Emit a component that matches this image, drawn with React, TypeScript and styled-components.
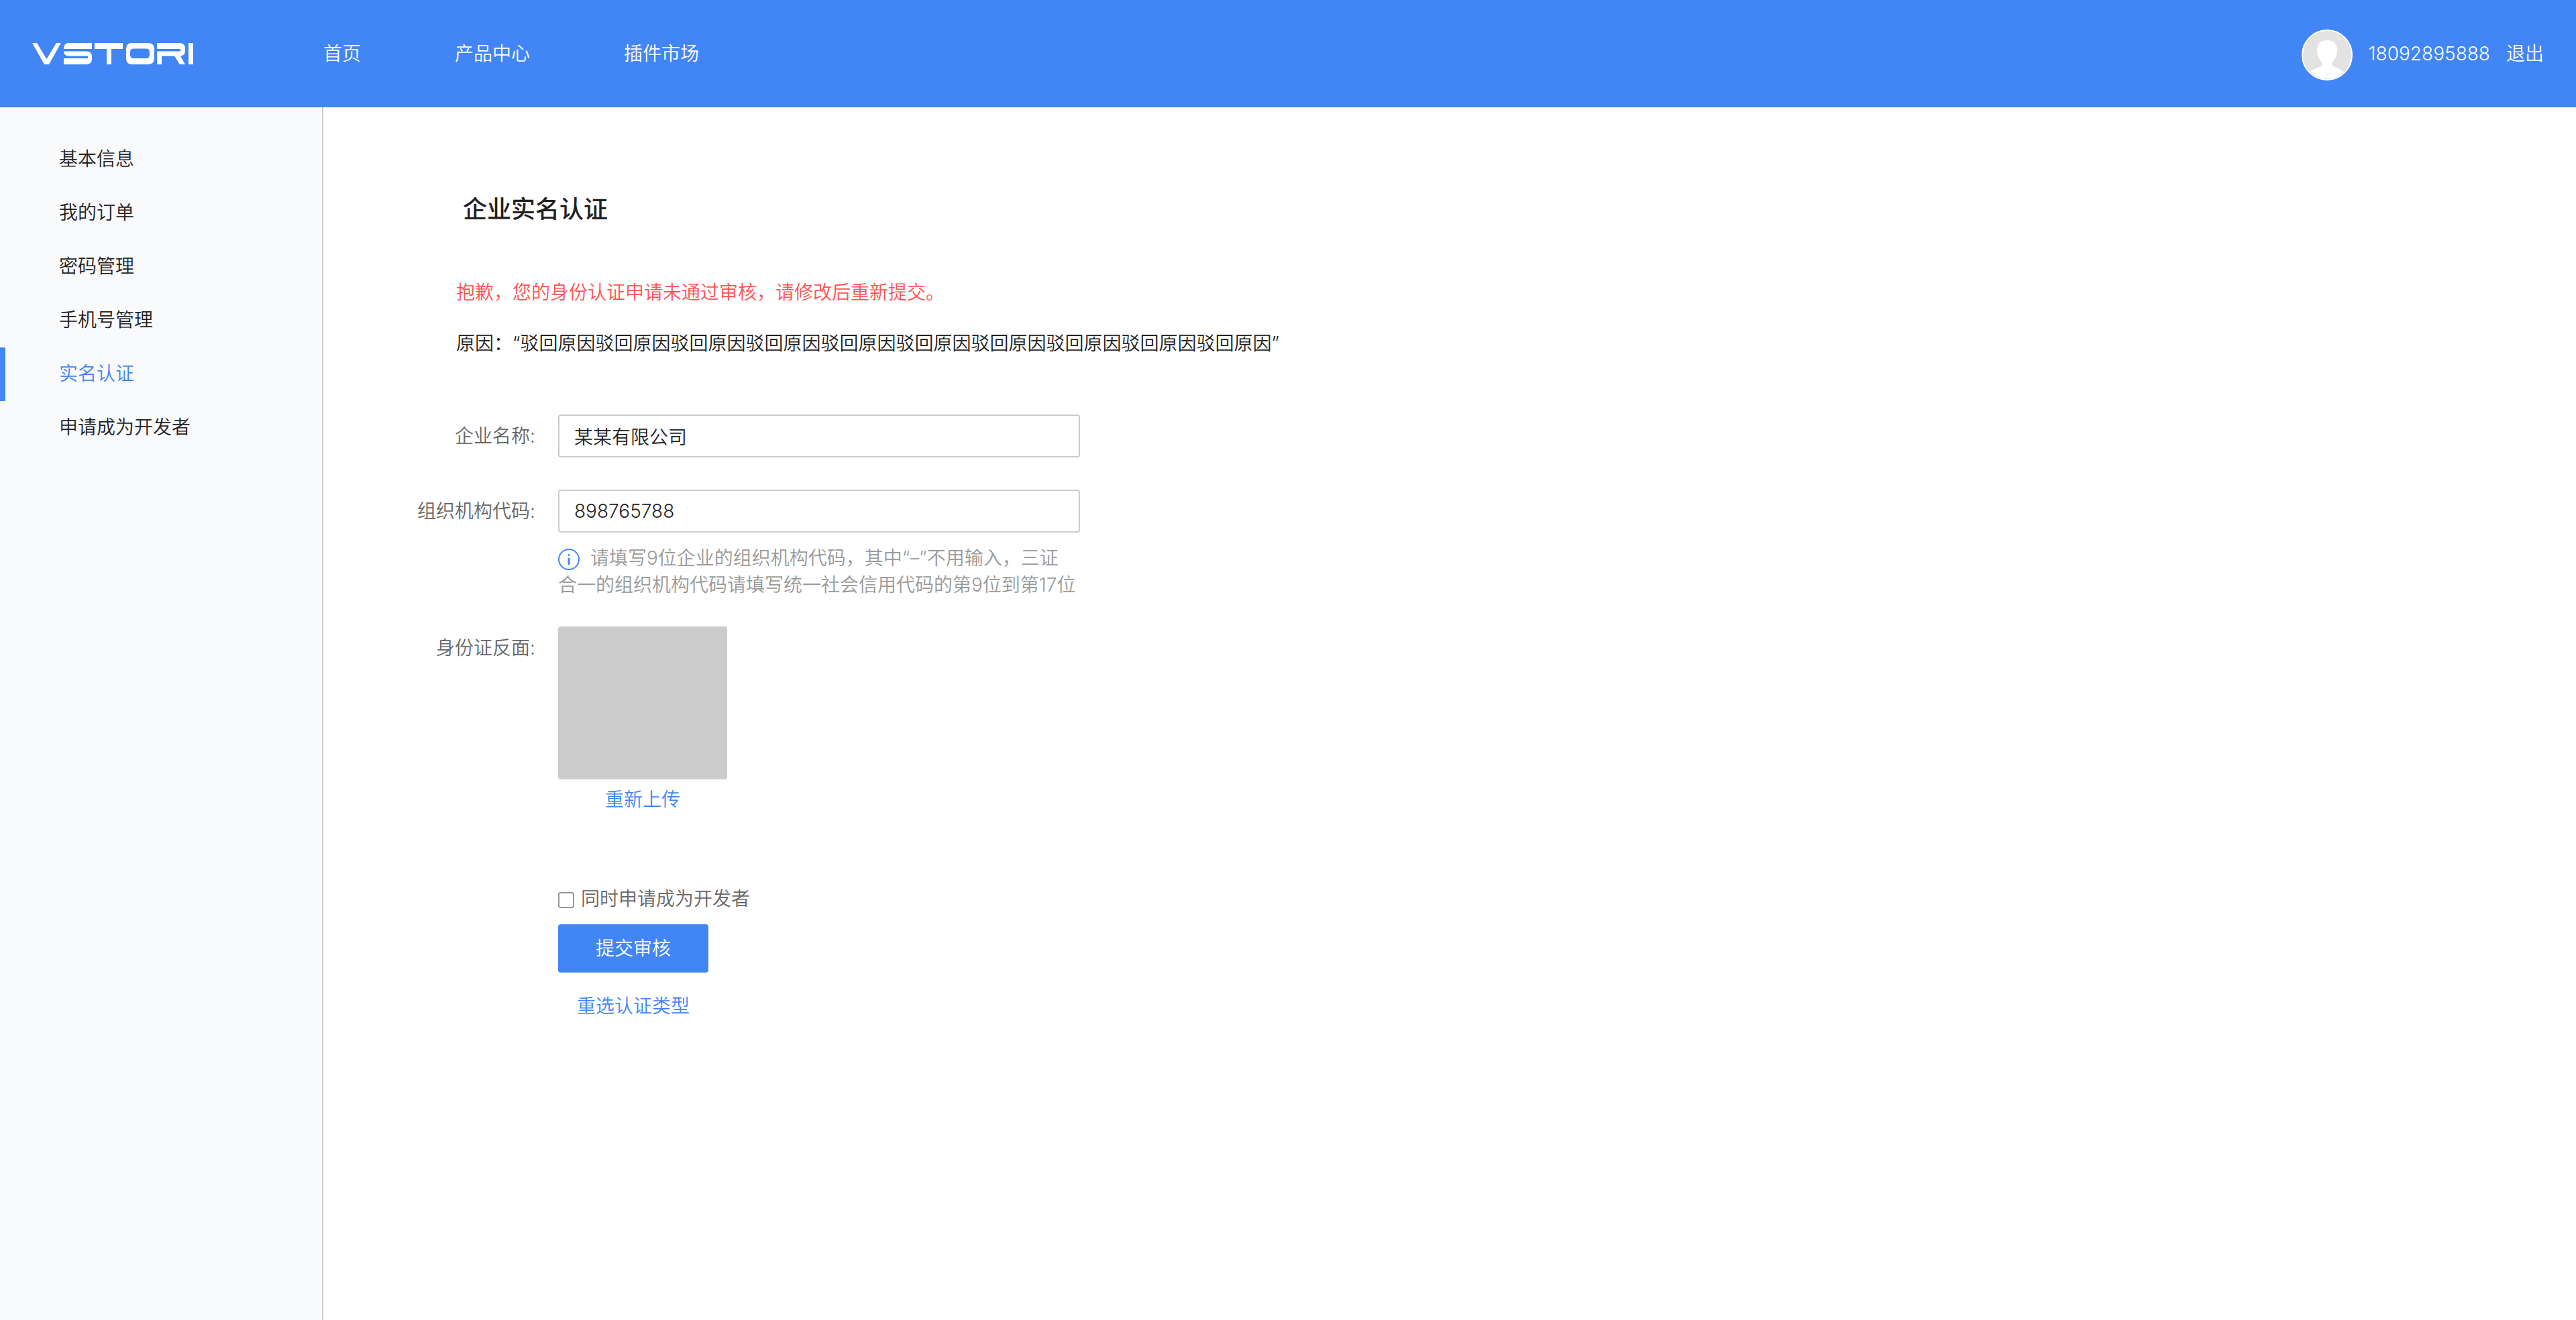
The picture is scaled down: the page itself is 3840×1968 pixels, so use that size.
import React, { useState } from "react";
import styled, { createGlobalStyle } from "styled-components";

const BLUE = "#4285f5";

const GlobalStyle = createGlobalStyle`
  * { box-sizing: border-box; }
  body {
    margin: 0;
    background: #fff;
    color: #222;
    font-family: Inter, "Noto Sans CJK SC DemiLight", "Noto Sans CJK SC", sans-serif;
    font-size: 28px;
    font-weight: 350;
    line-height: 40px;
  }
  a { color: inherit; text-decoration: none; }
`;

const Page = styled.div`
  min-height: 100vh;
  display: flex;
  flex-direction: column;
`;

const Header = styled.header`
  height: 160px;
  padding: 0 48px;
  display: flex;
  align-items: center;
  background: ${BLUE};
  color: #fff;
`;

const Logo = styled.svg`
  display: block;
  width: 240px;
  height: 32px;
`;

const Nav = styled.nav`
  display: flex;
  gap: 140px;
  margin-left: 194px;
`;

const Account = styled.div`
  display: flex;
  align-items: center;
  gap: 24px;
  margin-left: auto;
`;

const Avatar = styled.svg`
  display: block;
  width: 76px;
  height: 76px;
  margin-top: 4px;
`;

const Body = styled.div`
  flex: 1;
  display: flex;
`;

const Sidebar = styled.aside`
  flex: none;
  width: 482px;
  padding-top: 38px;
  background: #f9fafc;
  border-right: 2px solid #ccc;
`;

const SideLink = styled.a<{ $active?: boolean }>`
  display: flex;
  align-items: center;
  height: 80px;
  padding: 0 0 2px 80px;
  border-left: 8px solid ${(p) => (p.$active ? BLUE : "transparent")};
  && { color: ${(p) => (p.$active ? BLUE : "#222")}; }
`;

const Main = styled.main`
  flex: 1;
  padding: 124px 80px 80px 140px;
`;

const Intro = styled.div`
  padding-left: 58px;
`;

const Title = styled.h1`
  margin: 0;
  padding-left: 10px;
  font-family: Inter, "Noto Sans CJK SC", sans-serif;
  font-size: 36px;
  line-height: 56px;
  font-weight: 500;
`;

const Notice = styled.p<{ $error?: boolean }>`
  margin: ${(p) => (p.$error ? "76px 0 0" : "36px 0 0")};
  color: ${(p) => (p.$error ? "#ff5353" : "#222")};
`;

const Form = styled.form`
  margin-top: 86px;
  display: grid;
  grid-template-columns: 176px minmax(0, 778px);
  column-gap: 34px;
`;

const Label = styled.label`
  line-height: 64px;
  text-align: right;
  white-space: nowrap;
  color: #666;
`;

const Field = styled.div<{ $gap: number }>`
  grid-column: 2;
  padding-bottom: ${(p) => p.$gap}px;
`;

const TextInput = styled.input`
  display: block;
  width: 100%;
  height: 64px;
  padding: 0 22px;
  border: 2px solid #ccc;
  border-radius: 4px;
  outline: none;
  background: #fff;
  color: #222;
  font: inherit;
`;

const Hint = styled.p`
  margin: 18px 0 0;
  color: #999;
`;

const InfoIcon = styled.svg`
  width: 32px;
  height: 32px;
  margin-right: 16px;
  vertical-align: -8px;
`;

const Upload = styled.div`
  width: 252px;
  padding-bottom: 108px;
  text-align: center;
`;

const Preview = styled.div`
  height: 228px;
  margin-bottom: 10px;
  border-radius: 4px;
  background: #ccc;
`;

const TextButton = styled.button`
  display: inline-block;
  padding: 0;
  border: 0;
  background: none;
  color: ${BLUE};
  font: inherit;
  cursor: pointer;
`;

const Actions = styled.div`
  grid-column: 2;
  display: flex;
  flex-direction: column;
  align-items: flex-start;
`;

const CheckLabel = styled.label`
  display: flex;
  align-items: center;
  gap: 10px;
  color: #666;
`;

const Checkbox = styled.input`
  appearance: none;
  width: 24px;
  height: 24px;
  margin: 4px 0 0;
  border: 2px solid #979797;
  border-radius: 4px;
  background: #fff;
  &:checked { background: ${BLUE}; border-color: ${BLUE}; }
`;

const ButtonStack = styled.div`
  display: flex;
  flex-direction: column;
  align-items: center;
  gap: 30px;
  margin-top: 18px;
`;

const Submit = styled.button`
  width: 224px;
  height: 72px;
  padding: 0;
  border: 0;
  border-radius: 4px;
  background: ${BLUE};
  color: #fff;
  font: inherit;
  cursor: pointer;
`;

const SIDE_ITEMS = ["基本信息", "我的订单", "密码管理", "手机号管理", "实名认证", "申请成为开发者"];
const REASON = "驳回原因".repeat(10);

export default function App() {
  const [company, setCompany] = useState("某某有限公司");
  const [code, setCode] = useState("898765788");

  return (
    <>
      <GlobalStyle />
      <Page lang="zh-CN">
        <Header>
          <a href="#home">
            <Logo viewBox="0 0 240 32" role="img" aria-label="VSTORI" fill="none" stroke="#fff">
              <path fill="#fff" stroke="none" d="M0 0H7L21.500 24L36 0H43L25 32H18Z" />
              <path fill="#fff" stroke="none" d="M55 0H89V9H47Q47 0 55 0Z" />
              <path fill="#fff" stroke="none" d="M47 12.500H80Q89 12.500 89 20V24Q89 32 80 32H47V23H83V19.500H55Q47 19.500 47 12.500Z" />
              <path strokeWidth="9" d="M93 4.500H135" />
              <path strokeWidth="7" d="M114.500 8V32" />
              <path fill="#fff" stroke="none" fillRule="evenodd" d="M149 0H172Q182 0 182 9V23Q182 32 172 32H149Q140 32 140 23V9Q140 0 149 0ZM152 8.500Q146 8.500 146 13.500V18Q146 23 152 23H169Q175 23 175 18V13.500Q175 8.500 169 8.500Z" />
              <path fill="#fff" stroke="none" d="M186 0H218Q228 0 228 8V12Q228 19 221 19.500L228 32H220L212 19.500H193V32H186V12.500H221V9H186Z" />
              <path strokeWidth="7" d="M236.500 0V32" />
            </Logo>
          </a>
          <Nav>
            <a href="#index">首页</a>
            <a href="#products">产品中心</a>
            <a href="#plugins">插件市场</a>
          </Nav>
          <Account>
            <Avatar viewBox="0 0 76 76" role="img" aria-label="头像">
              <circle cx="38" cy="38" r="37" fill="#e3e3e3" />
              <path fill="#fff" d="M13 63C20 58 27 56 30 54Q32 51 30 49C26 44 23 38 23 31C23 21 29 16 38 16C47 16 53 21 53 31C53 38 50 44 46 49Q44 51 46 54C49 56 56 58 63 63A36 36 0 0 1 13 63Z" />
              <circle cx="38" cy="38" r="37" fill="none" stroke="#fff" strokeWidth="2" />
            </Avatar>
            <span>18092895888</span>
            <a href="#logout">退出</a>
          </Account>
        </Header>
        <Body>
          <Sidebar>
            {SIDE_ITEMS.map((item) => (
              <SideLink key={item} href={"#" + item} $active={item === "实名认证"}>
                {item}
              </SideLink>
            ))}
          </Sidebar>
          <Main>
            <Intro>
              <Title>企业实名认证</Title>
              <Notice $error>抱歉，您的身份认证申请未通过审核，请修改后重新提交。</Notice>
              <Notice>原因：“{REASON}”</Notice>
            </Intro>
            <Form onSubmit={(e) => e.preventDefault()}>
              <Label htmlFor="company">企业名称:</Label>
              <Field $gap={48}>
                <TextInput id="company" value={company} onChange={(e) => setCompany(e.target.value)} />
              </Field>
              <Label htmlFor="code">组织机构代码:</Label>
              <Field $gap={42}>
                <TextInput id="code" value={code} onChange={(e) => setCode(e.target.value)} />
                <Hint>
                  <InfoIcon viewBox="0 0 32 32" fill="none" stroke={BLUE} aria-hidden="true">
                    <circle cx="16" cy="16" r="15" strokeWidth="2" />
                    <path strokeWidth="3" strokeLinecap="round" d="M16 15V22.500" />
                    <circle cx="16" cy="9.500" r="1.500" fill={BLUE} stroke="none" />
                  </InfoIcon>
                  请填写9位企业的组织机构代码，其中“–”不用输入，三证
                  <br />
                  合一的组织机构代码请填写统一社会信用代码的第9位到第17位
                </Hint>
              </Field>
              <Label as="span">身份证反面:</Label>
              <Upload>
                <Preview />
                <TextButton type="button">重新上传</TextButton>
              </Upload>
              <Actions>
                <CheckLabel>
                  <Checkbox type="checkbox" />
                  同时申请成为开发者
                </CheckLabel>
                <ButtonStack>
                  <Submit type="submit">提交审核</Submit>
                  <TextButton type="button">重选认证类型</TextButton>
                </ButtonStack>
              </Actions>
            </Form>
          </Main>
        </Body>
      </Page>
    </>
  );
}
